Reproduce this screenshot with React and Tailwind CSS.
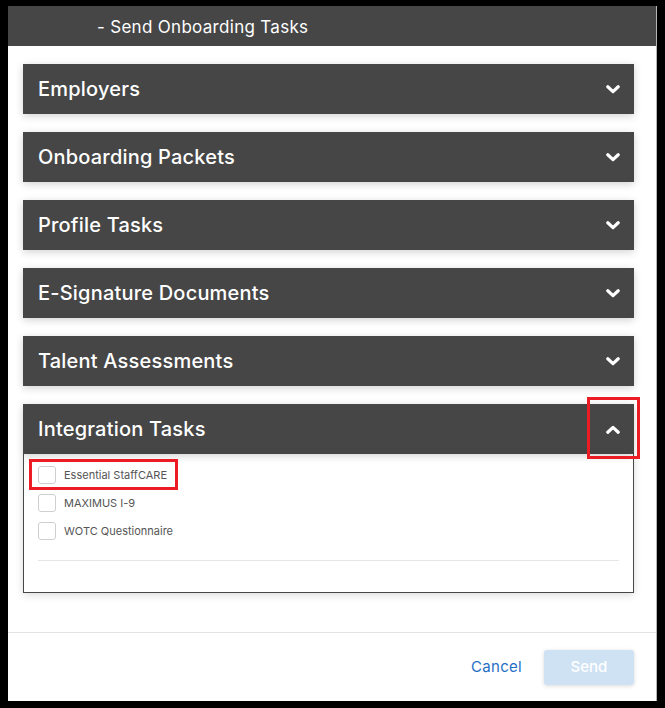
import { useState } from 'react'

const sections = [
  'Employers',
  'Onboarding Packets',
  'Profile Tasks',
  'E-Signature Documents',
  'Talent Assessments',
]

const integrations = ['Essential StaffCARE', 'MAXIMUS I-9', 'WOTC Questionnaire']

function Chevron({ up }) {
  return (
    <svg width="14" height="9" viewBox="0 0 14 9" className={up ? 'rotate-180' : ''}>
      <polyline points="1.8,1.8 7,6.6 12.2,1.8" fill="none" stroke="#fff" strokeWidth="3.2" strokeLinecap="round" strokeLinejoin="round" />
    </svg>
  )
}

function SectionHeader({ title, open }) {
  return (
    <div className="h-[50px] bg-[#464646] flex items-center justify-between pl-[15px] pr-[14px] shadow-[0_2px_8px_rgba(0,0,0,0.18)]">
      <span className="text-white text-[20px] font-medium tracking-[0.2px]">{title}</span>
      <Chevron up={open} />
    </div>
  )
}

export default function App() {
  const [checked, setChecked] = useState({})

  return (
    <div
      className="relative w-[665px] h-[708px] bg-black pt-[6px] pl-[8px] pr-[8px] pb-[7px]"
      style={{ fontFamily: 'Inter, "Noto Sans", sans-serif' }}
    >
      <div className="h-full bg-white flex flex-col border-r border-[#b5b5b5]">
        {/* ── Title bar ── */}
        <div className="h-[40px] shrink-0 bg-[#464646] flex items-center pl-[89px] pt-[4px] text-white text-[17px] tracking-[0.3px]">
          - Send Onboarding Tasks
        </div>

        {/* ── Sections ── */}
        <div className="flex-1 pl-[15px] pr-[22px] pt-[18px] flex flex-col gap-[18px]">
          {sections.map(s => (
            <SectionHeader key={s} title={s} />
          ))}

          <div>
            <SectionHeader title="Integration Tasks" open />
            <div className="border border-t-0 border-[#474747] pl-[14px] pr-[14px] pt-[12px] pb-[31px] shadow-[0_2px_8px_rgba(0,0,0,0.15)]">
              <div className="flex flex-col gap-[10px]">
                {integrations.map(name => (
                  <label key={name} className="flex items-center gap-[8px] h-[18px] cursor-pointer">
                    <button
                      type="button"
                      onClick={() => setChecked(c => ({ ...c, [name]: !c[name] }))}
                      className={`w-[18px] h-[18px] rounded-[3px] border border-[#cfcfcf] ${checked[name] ? 'bg-[#1f6fc5]' : 'bg-white'}`}
                    />
                    <span className="text-[11px] text-[#555]">{name}</span>
                  </label>
                ))}
              </div>
              <div className="mt-[20px] border-t border-[#e6e6e6]" />
            </div>
          </div>
        </div>

        {/* ── Footer ── */}
        <div className="h-[69px] shrink-0 border-t border-[#e3e3e3] flex items-start justify-end gap-[22px] pt-[17px] pr-[22px]">
          <button className="h-[35px] text-[15px] tracking-[0.3px] text-[#1f6fc5]">Cancel</button>
          <button className="w-[90px] h-[35px] rounded-[3px] bg-[#cfe2f3] text-white text-[15px] font-medium shadow-[0_1px_4px_rgba(0,0,0,0.15)]">
            Send
          </button>
        </div>
      </div>

      {/* ── Red annotation boxes ── */}
      <div className="absolute left-[29px] top-[459px] w-[149px] h-[31px] border-[3px] border-[#ec1c24] pointer-events-none" />
      <div className="absolute left-[587px] top-[397px] w-[53px] h-[62px] border-[3px] border-[#ec1c24] pointer-events-none" />
    </div>
  )
}
